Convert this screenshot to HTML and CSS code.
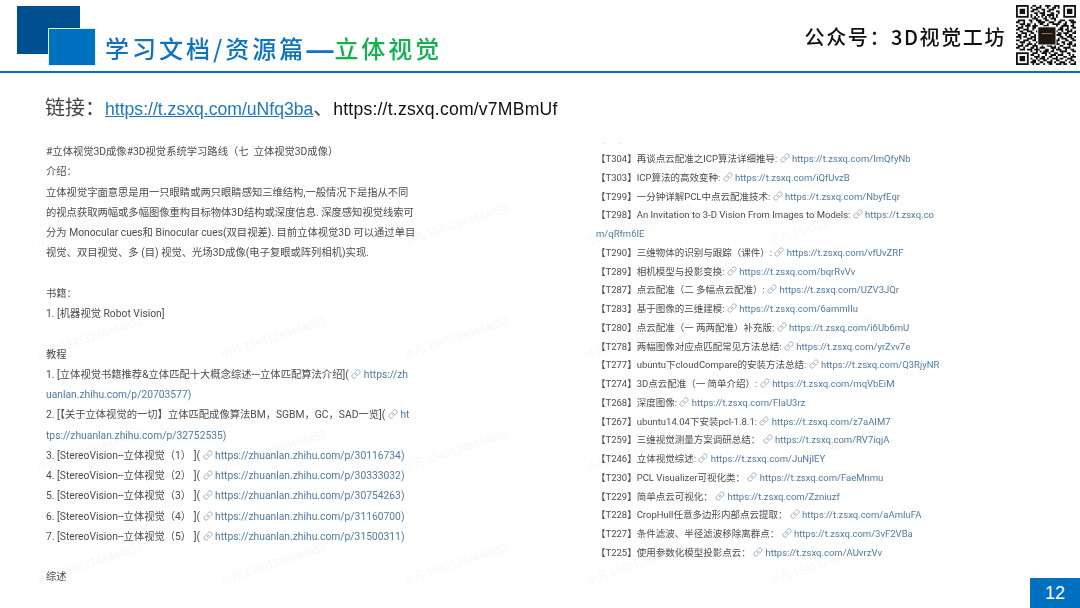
FILE: index.html
```html
<!DOCTYPE html>
<html lang="zh">
<head>
<meta charset="utf-8">
<title>学习文档/资源篇—立体视觉</title>
<link rel="stylesheet" href="styles.css">
</head>
<body>
<svg class="defs" width="0" height="0" aria-hidden="true">
  <symbol id="chain" viewBox="0 0 24 24"><path d="M10 13a5 5 0 0 0 7.54.54l3-3a5 5 0 0 0-7.07-7.07l-1.72 1.71"/><path d="M14 11a5 5 0 0 0-7.54-.54l-3 3a5 5 0 0 0 7.07 7.07l1.71-1.71"/></symbol>
</svg>
<main class="slide">
  <header class="head">
    <div class="logo"><span class="logo-front"></span></div>
    <h1 class="title">学习文档/资源篇<span class="dash">—</span><em>立体视觉</em></h1>
    <div class="brand">公众号：3D视觉工坊</div>
    <svg class="qr" viewBox="0 0 33 33" aria-label="QR code">
      <g class="qr-finder">
        <rect x=".5" y=".5" width="6" height="6"/><rect x="26.5" y=".5" width="6" height="6"/><rect x=".5" y="26.5" width="6" height="6"/>
      </g>
      <path class="qr-solid" d="M2 2h3v3H2zM28 2h3v3h-3zM2 28h3v3H2z"/>
      <path class="qr-mods" d="M9 .5h2M13 .5h1M16 .5h3M21 .5h3M8 1.5h1M11 1.5h3M17 1.5h1M20 1.5h2M23 1.5h1M9 2.5h3M14 2.5h2M18 2.5h3M8 3.5h2M12 3.5h1M15 3.5h1M17 3.5h2M22 3.5h2M10 4.5h2M13 4.5h3M19 4.5h2M23 4.5h1M8 5.5h1M11 5.5h1M14 5.5h2M17 5.5h4M22 5.5h1M8 6.5h1M10 6.5h1M12 6.5h1M14 6.5h1M16 6.5h1M18 6.5h1M20 6.5h1M22 6.5h1M9 7.5h3M15 7.5h2M19 7.5h3M1 8.5h4M7 8.5h2M11 8.5h3M16 8.5h2M21 8.5h1M24 8.5h3M29 8.5h3M0 9.5h2M4 9.5h1M8 9.5h1M12 9.5h4M18 9.5h3M23 9.5h2M27 9.5h1M30 9.5h3M2 10.5h3M6 10.5h2M10 10.5h1M13 10.5h2M17 10.5h1M20 10.5h4M26 10.5h2M31 10.5h1M0 11.5h1M3 11.5h1M5 11.5h3M9 11.5h3M15 11.5h3M22 11.5h1M25 11.5h4M30 11.5h2M1 12.5h3M6 12.5h1M9 12.5h2M24 12.5h2M28 12.5h1M31 12.5h2M0 13.5h2M4 13.5h3M9 13.5h1M23 13.5h3M27 13.5h2M30 13.5h1M2 14.5h2M6 14.5h3M11 14.5h1M22 14.5h1M25 14.5h1M28 14.5h3M32 14.5h1M0 15.5h1M3 15.5h3M8 15.5h2M23 15.5h2M26 15.5h3M31 15.5h2M1 16.5h2M5 16.5h1M7 16.5h1M10 16.5h1M22 16.5h3M27 16.5h1M29 16.5h2M0 17.5h3M4 17.5h2M8 17.5h3M24 17.5h2M28 17.5h3M32 17.5h1M2 18.5h1M6 18.5h3M10 18.5h1M23 18.5h1M25 18.5h3M30 18.5h2M0 19.5h2M4 19.5h3M9 19.5h2M22 19.5h2M27 19.5h2M31 19.5h2M2 20.5h3M7 20.5h1M11 20.5h2M15 20.5h2M20 20.5h3M25 20.5h2M29 20.5h2M0 21.5h1M3 21.5h1M6 21.5h3M10 21.5h1M13 21.5h4M19 21.5h1M22 21.5h2M26 21.5h1M28 21.5h3M32 21.5h1M1 22.5h3M5 22.5h2M9 22.5h3M14 22.5h1M17 22.5h3M21 22.5h1M24 22.5h2M29 22.5h1M31 22.5h2M0 23.5h2M4 23.5h1M8 23.5h2M11 23.5h1M13 23.5h3M19 23.5h3M23 23.5h1M26 23.5h4M2 24.5h3M6 24.5h3M10 24.5h3M16 24.5h2M20 24.5h1M22 24.5h3M27 24.5h1M30 24.5h2M8 25.5h1M11 25.5h1M13 25.5h1M15 25.5h3M19 25.5h2M24 25.5h4M31 25.5h2M9 26.5h3M14 26.5h3M18 26.5h1M21 26.5h2M25 26.5h1M28 26.5h2M8 27.5h2M12 27.5h1M16 27.5h1M19 27.5h3M23 27.5h3M29 27.5h1M31 27.5h1M10 28.5h3M14 28.5h2M18 28.5h2M22 28.5h1M26 28.5h2M30 28.5h3M8 29.5h1M11 29.5h1M13 29.5h3M17 29.5h1M20 29.5h3M24 29.5h2M28 29.5h3M9 30.5h2M12 30.5h1M15 30.5h2M19 30.5h1M22 30.5h2M27 30.5h1M30 30.5h2M8 31.5h3M13 31.5h2M17 31.5h3M21 31.5h1M24 31.5h3M29 31.5h1M32 31.5h1M9 32.5h1M11 32.5h2M15 32.5h1M18 32.5h2M22 32.5h3M26 32.5h2M30 32.5h3"/>
      <rect class="qr-logo" x="12" y="12" width="10" height="10"/>
      <rect class="qr-logo-line" x="14" y="15.5" width="6" height=".5"/>
    </svg>
  </header>

  <p class="links"><span class="links-label">链接：</span><a class="link-a" href="#">https://t.zsxq.com/uNfq3ba</a><span class="links-label">、</span><span class="link-b">https://t.zsxq.com/v7MBmUf</span></p>

  <div class="watermarks" aria-hidden="true">
    <span>小凡 15451248444852</span><span>小凡 15451248444852</span><span>小凡 15451248444852</span><span>小凡 15451248444852</span><span>小凡 15451248444852</span>
    <span>小凡 15451248444852</span><span>小凡 15451248444852</span><span>小凡 15451248444852</span><span>小凡 15451248444852</span><span>小凡 15451248444852</span>
    <span>小凡 15451248444852</span><span>小凡 15451248444852</span><span>小凡 15451248444852</span><span>小凡 15451248444852</span><span>小凡 15451248444852</span>
    <span>小凡 15451248444852</span><span>小凡 15451248444852</span><span>小凡 15451248444852</span><span>小凡 15451248444852</span><span>小凡 15451248444852</span>
  </div>

  <section class="docs">
    <article class="doc-left">
      <p>#立体视觉3D成像#3D视觉系统学习路线（七&nbsp; 立体视觉3D成像）</p>
      <p>介绍：</p>
      <p>立体视觉字面意思是用一只眼睛或两只眼睛感知三维结构,一般情况下是指从不同</p>
      <p>的视点获取两幅或多幅图像重构目标物体3D结构或深度信息. 深度感知视觉线索可</p>
      <p>分为 Monocular cues和 Binocular cues(双目视差). 目前立体视觉3D 可以通过单目</p>
      <p>视觉、双目视觉、多 (目) 视觉、光场3D成像(电子复眼或阵列相机)实现.</p>
      <p class="blank">&nbsp;</p>
      <p>书籍：</p>
      <p>1. [机器视觉 Robot Vision]</p>
      <p class="blank">&nbsp;</p>
      <p>教程</p>
      <p>1. [立体视觉书籍推荐&amp;立体匹配十大概念综述---立体匹配算法介绍]( <svg class="ic"><use href="#chain"/></svg> <span class="url">https://zh</span></p>
      <p class="url">uanlan.zhihu.com/p/20703577)</p>
      <p>2. [【关于立体视觉的一切】立体匹配成像算法BM，SGBM，GC，SAD一览]( <svg class="ic"><use href="#chain"/></svg> <span class="url">ht</span></p>
      <p class="url">tps://zhuanlan.zhihu.com/p/32752535)</p>
      <p>3. [StereoVision--立体视觉（1） ]( <svg class="ic"><use href="#chain"/></svg> <span class="url">https://zhuanlan.zhihu.com/p/30116734)</span></p>
      <p>4. [StereoVision--立体视觉（2） ]( <svg class="ic"><use href="#chain"/></svg> <span class="url">https://zhuanlan.zhihu.com/p/30333032)</span></p>
      <p>5. [StereoVision--立体视觉（3） ]( <svg class="ic"><use href="#chain"/></svg> <span class="url">https://zhuanlan.zhihu.com/p/30754263)</span></p>
      <p>6. [StereoVision--立体视觉（4） ]( <svg class="ic"><use href="#chain"/></svg> <span class="url">https://zhuanlan.zhihu.com/p/31160700)</span></p>
      <p>7. [StereoVision--立体视觉（5） ]( <svg class="ic"><use href="#chain"/></svg> <span class="url">https://zhuanlan.zhihu.com/p/31500311)</span></p>
      <p class="blank">&nbsp;</p>
      <p>综述</p>
    </article>

    <article class="doc-right">
      <p class="cut">, ,</p>
      <p>【T304】再谈点云配准之ICP算法详细推导: <svg class="ic"><use href="#chain"/></svg> <span class="url">https://t.zsxq.com/ImQfyNb</span></p>
      <p>【T303】ICP算法的高效变种: <svg class="ic"><use href="#chain"/></svg> <span class="url">https://t.zsxq.com/iQfUvzB</span></p>
      <p>【T299】一分钟详解PCL中点云配准技术: <svg class="ic"><use href="#chain"/></svg> <span class="url">https://t.zsxq.com/NbyfEqr</span></p>
      <p>【T298】An Invitation to 3-D Vision From Images to Models: <svg class="ic"><use href="#chain"/></svg> <span class="url">https://t.zsxq.co</span></p>
      <p class="url">m/qRfm6IE</p>
      <p>【T290】三维物体的识别与跟踪（课件）: <svg class="ic"><use href="#chain"/></svg> <span class="url">https://t.zsxq.com/vfUvZRF</span></p>
      <p>【T289】相机模型与投影变换: <svg class="ic"><use href="#chain"/></svg> <span class="url">https://t.zsxq.com/bqrRvVv</span></p>
      <p>【T287】点云配准（二 多幅点云配准）: <svg class="ic"><use href="#chain"/></svg> <span class="url">https://t.zsxq.com/UZV3JQr</span></p>
      <p>【T283】基于图像的三维建模: <svg class="ic"><use href="#chain"/></svg> <span class="url">https://t.zsxq.com/6ammIIu</span></p>
      <p>【T280】点云配准（一 两两配准）补充版: <svg class="ic"><use href="#chain"/></svg> <span class="url">https://t.zsxq.com/i6Ub6mU</span></p>
      <p>【T278】两幅图像对应点匹配常见方法总结: <svg class="ic"><use href="#chain"/></svg> <span class="url">https://t.zsxq.com/yrZvv7e</span></p>
      <p>【T277】ubuntu下cloudCompare的安装方法总结: <svg class="ic"><use href="#chain"/></svg> <span class="url">https://t.zsxq.com/Q3RjyNR</span></p>
      <p>【T274】3D点云配准（一 简单介绍）: <svg class="ic"><use href="#chain"/></svg> <span class="url">https://t.zsxq.com/mqVbEiM</span></p>
      <p>【T268】深度图像: <svg class="ic"><use href="#chain"/></svg> <span class="url">https://t.zsxq.com/FIaU3rz</span></p>
      <p>【T267】ubuntu14.04下安装pcl-1.8.1: <svg class="ic"><use href="#chain"/></svg> <span class="url">https://t.zsxq.com/z7aAIM7</span></p>
      <p>【T259】三维视觉测量方案调研总结： <svg class="ic"><use href="#chain"/></svg> <span class="url">https://t.zsxq.com/RV7iqjA</span></p>
      <p>【T246】立体视觉综述: <svg class="ic"><use href="#chain"/></svg> <span class="url">https://t.zsxq.com/JuNjIEY</span></p>
      <p>【T230】PCL Visualizer可视化类： <svg class="ic"><use href="#chain"/></svg> <span class="url">https://t.zsxq.com/FaeMnmu</span></p>
      <p>【T229】简单点云可视化： <svg class="ic"><use href="#chain"/></svg> <span class="url">https://t.zsxq.com/Zzniuzf</span></p>
      <p>【T228】CropHull任意多边形内部点云提取： <svg class="ic"><use href="#chain"/></svg> <span class="url">https://t.zsxq.com/aAmIuFA</span></p>
      <p>【T227】条件滤波、半径滤波移除离群点： <svg class="ic"><use href="#chain"/></svg> <span class="url">https://t.zsxq.com/3vF2VBa</span></p>
      <p>【T225】使用参数化模型投影点云： <svg class="ic"><use href="#chain"/></svg> <span class="url">https://t.zsxq.com/AUvrzVv</span></p>
    </article>
  </section>

  <div class="page-no">12</div>
</main>
</body>
</html>
```

FILE: styles.css
```css
* { box-sizing: border-box; }
html, body { margin: 0; padding: 0; background: #fff; }
.defs { position: absolute; }
.slide {
  position: relative;
  width: 1080px;
  height: 608px;
  overflow: hidden;
  background: #fff;
  display: flex;
  flex-direction: column;
  font-family: "Noto Sans CJK SC", "Liberation Sans", sans-serif;
}
.head {
  flex: none;
  height: 73px;
  border-bottom: 2px solid #0070c0;
  display: flex;
  align-items: flex-start;
  padding: 5px 4px 0 17px;
}
.logo {
  position: relative;
  flex: none;
  width: 63px;
  height: 48px;
  margin-top: 1px;
  background: #00508f;
}
.logo-front {
  position: absolute;
  left: 32px;
  top: 23px;
  width: 46px;
  height: 36px;
  background: #0070c0;
  box-shadow: 0 0 0 1px #e4eef7;
}
.title {
  margin: 28px 0 0 25px;
  font-size: 24px;
  line-height: 30px;
  font-weight: 500;
  letter-spacing: 3px;
  color: #0c74c2;
  white-space: nowrap;
  filter: blur(.3px);
}
.dash { font: 700 27px/30px "Liberation Sans", sans-serif; letter-spacing: 1px; vertical-align: -1px; }
.title em { font-style: normal; color: #12b24f; }
.brand {
  margin: 19px 10px 0 auto;
  font-size: 20px;
  line-height: 26px;
  font-weight: 500;
  letter-spacing: 1.6px;
  color: #111;
  white-space: nowrap;
  filter: blur(.3px);
}
.qr { flex: none; width: 60px; height: 60px; filter: blur(.35px); }
.qr-finder rect { fill: none; stroke: #111; stroke-width: 1; }
.qr-solid { fill: #111; }
.qr-mods { fill: none; stroke: #111; stroke-width: 1; }
.qr-logo { fill: #1d1712; stroke: #fff; stroke-width: .5; }
.qr-logo-line { fill: #a5854f; }
.links {
  flex: none;
  margin: 0;
  padding: 22px 0 0 45px;
  height: 53px;
  font-size: 17.6px;
  line-height: 27px;
  font-family: "Liberation Sans", "Noto Sans CJK SC", sans-serif;
  color: #111;
  white-space: nowrap;
  filter: blur(.25px);
}
.links-label { font-size: 20px; color: #444; }
.link-a { color: #1d78c4; text-decoration: underline; }
.link-b { letter-spacing: .2px; }
.watermarks {
  position: absolute;
  left: 40px;
  top: 135px;
  display: grid;
  grid-template-columns: repeat(5, 183px);
  grid-auto-rows: 113px;
  font-size: 11px;
  color: #f7f7f7;
  white-space: nowrap;
}
.watermarks span { transform: rotate(-18deg); transform-origin: 0 100%; align-self: end; }
.docs {
  position: relative;
  flex: 1;
  display: flex;
  align-items: flex-start;
  min-height: 0;
  padding-left: 46px;
  font-family: "Roboto", "Noto Sans CJK SC", sans-serif;
  color: #4c4c4c;
  filter: blur(.45px);
}
.docs p { margin: 0; white-space: nowrap; }
.doc-left {
  flex: none;
  width: 550px;
  padding-top: 16px;
  font-size: 10.3px;
  line-height: 20.25px;
}
.doc-right {
  flex: none;
  padding-top: 12px;
  font-size: 9.5px;
  line-height: 18.75px;
}
.cut { color: #8aa; height: 7px; line-height: 7px; padding-left: 8px; font-size: 6px; word-spacing: 13px; margin-bottom: 5px !important; }
.url { color: #4f7aa6; }
.ic {
  width: 10px;
  height: 10px;
  vertical-align: -1px;
  fill: none;
  stroke: #8ea3b8;
  stroke-width: 2;
  stroke-linecap: round;
  stroke-linejoin: round;
}
.page-no {
  position: absolute;
  right: 0;
  bottom: 0;
  width: 50px;
  height: 30px;
  background: #0070c0;
  color: #fff;
  font: 18px/30px "Liberation Sans", sans-serif;
  text-align: center;
}
```
